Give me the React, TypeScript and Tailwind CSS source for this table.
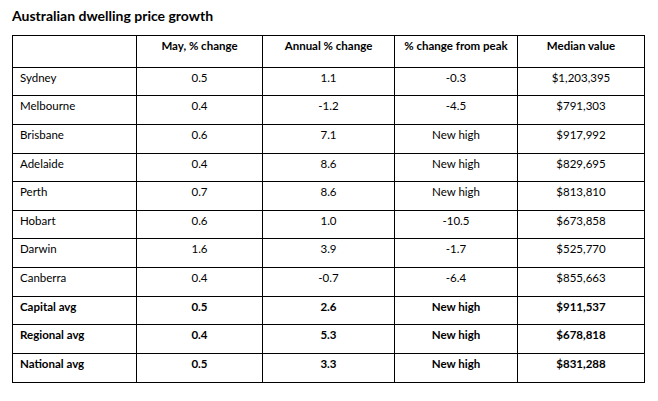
const rows = [
  { name: "Sydney", may: "0.5", annual: "1.1", peak: "-0.3", median: "$1,203,395", bold: false },
  { name: "Melbourne", may: "0.4", annual: "-1.2", peak: "-4.5", median: "$791,303", bold: false },
  { name: "Brisbane", may: "0.6", annual: "7.1", peak: "New high", median: "$917,992", bold: false },
  { name: "Adelaide", may: "0.4", annual: "8.6", peak: "New high", median: "$829,695", bold: false },
  { name: "Perth", may: "0.7", annual: "8.6", peak: "New high", median: "$813,810", bold: false },
  { name: "Hobart", may: "0.6", annual: "1.0", peak: "-10.5", median: "$673,858", bold: false },
  { name: "Darwin", may: "1.6", annual: "3.9", peak: "-1.7", median: "$525,770", bold: false },
  { name: "Canberra", may: "0.4", annual: "-0.7", peak: "-6.4", median: "$855,663", bold: false },
  { name: "Capital avg", may: "0.5", annual: "2.6", peak: "New high", median: "$911,537", bold: true },
  { name: "Regional avg", may: "0.4", annual: "5.3", peak: "New high", median: "$678,818", bold: true },
  { name: "National avg", may: "0.5", annual: "3.3", peak: "New high", median: "$831,288", bold: true },
];

const heights = ["h-[28px]", "h-[29px]", "h-[29px]", "h-[28px]", "h-[29px]", "h-[28px]", "h-[29px]", "h-[29px]", "h-[28px]", "h-[29px]", "h-[29px]"];

export default function App() {
  return (
    <div className="w-[658px] h-[401px] bg-white text-black" style={{ fontFamily: "Lato, 'Open Sans', sans-serif" }}>
      <div className="pl-[12px] pt-[7px] h-[35px] text-[14px] font-bold leading-[18px]">
        Australian dwelling price growth
      </div>
      <table className="ml-[12px] border-collapse table-fixed text-[11.5px] leading-[14px]">
        <colgroup>
          <col className="w-[124px]" />
          <col className="w-[126px]" />
          <col className="w-[132px]" />
          <col className="w-[123px]" />
          <col className="w-[127px]" />
        </colgroup>
        <thead>
          <tr className="h-[32px] font-bold">
            <th className="border border-black"></th>
            <th className="border border-black align-top pt-[3px] text-center">May, % change</th>
            <th className="border border-black align-top pt-[3px] text-center">Annual % change</th>
            <th className="border border-black align-top pt-[3px] text-center">% change from peak</th>
            <th className="border border-black align-top pt-[3px] text-center">Median value</th>
          </tr>
        </thead>
        <tbody>
          {rows.map((r, i) => (
            <tr key={r.name} className={`${heights[i]} ${r.bold ? "font-bold" : ""}`}>
              <td className="border border-black align-top pt-[3px] pl-[7px] text-left">{r.name}</td>
              <td className="border border-black align-top pt-[3px] text-center">{r.may}</td>
              <td className="border border-black align-top pt-[3px] text-center">{r.annual}</td>
              <td className="border border-black align-top pt-[3px] text-center">{r.peak}</td>
              <td className="border border-black align-top pt-[3px] text-center">{r.median}</td>
            </tr>
          ))}
        </tbody>
      </table>
    </div>
  );
}
